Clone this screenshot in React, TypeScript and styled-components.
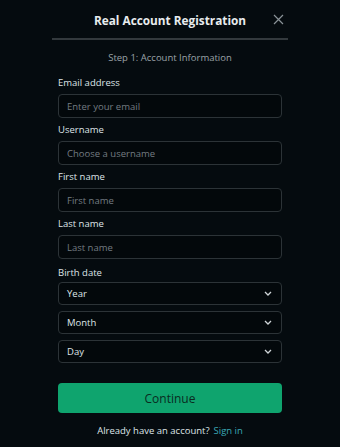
import React from "react";
import styled, { createGlobalStyle } from "styled-components";

const Global = createGlobalStyle`
  html, body { margin: 0; padding: 0; background: #050b0f; }
  body { font-family: "Open Sans", "Noto Sans", sans-serif; }
  * { box-sizing: border-box; }
`;

const Modal = styled.div`
  width: 340px;
  height: 447px;
  background: #050b0f;
  display: flex;
  flex-direction: column;
  align-items: center;
`;

const Header = styled.div`
  width: 236px;
  height: 40px;
  position: relative;
  display: flex;
  align-items: center;
  justify-content: center;
  border-bottom: 2px solid #33393d;
`;

const Title = styled.h1`
  margin: 0;
  padding-top: 1px;
  font-size: 11.8px;
  font-weight: 700;
  color: #e8ecee;
`;

const Close = styled.button`
  position: absolute;
  right: 4px;
  top: 13px;
  width: 12px;
  height: 12px;
  padding: 0;
  border: none;
  background: transparent;
  display: flex;
  align-items: center;
  justify-content: center;
`;

const Step = styled.div`
  margin-top: 11px;
  font-size: 9.5px;
  color: #9ba3a8;
`;

const Form = styled.form`
  width: 224px;
  margin-top: 13px;
  display: flex;
  flex-direction: column;
`;

const Field = styled.div`
  display: flex;
  flex-direction: column;
  margin-bottom: 6px;
`;

const Label = styled.label<{ $gap?: number; $top?: number }>`
  font-size: 9.5px;
  color: #dfe5e8;
  margin-top: ${(p) => p.$top ?? 0}px;
  margin-bottom: ${(p) => p.$gap ?? 6}px;
  line-height: 11px;
`;

const Input = styled.input`
  height: 24px;
  width: 100%;
  border: 1px solid #2c3337;
  border-radius: 4px;
  background: #03080b;
  padding: 0 8px;
  font-family: inherit;
  font-size: 9.5px;
  color: #e0e5e8;
  outline: none;
  &::placeholder { color: #737c82; }
`;

const SelectBox = styled.div`
  height: 23px;
  border: 1px solid #2c3337;
  border-radius: 4px;
  background: #03080b;
  padding: 0 9px 0 8px;
  display: flex;
  align-items: center;
  justify-content: space-between;
  font-size: 9.5px;
  color: #dfe5e8;
  margin-bottom: 6px;
`;

const Button = styled.button`
  margin-top: 14px;
  height: 30px;
  width: 100%;
  border: none;
  border-radius: 4px;
  background: #0fa46e;
  color: #0a2b1f;
  font-family: inherit;
  font-size: 12px;
`;

const Footer = styled.div`
  margin-top: 11px;
  font-size: 9.5px;
  color: #dfe5e8;
  text-align: center;
`;

const Link = styled.a`
  color: #3aa9b5;
  margin-left: 4px;
  text-decoration: none;
`;

const Chevron = () => (
  <svg width="8" height="5" viewBox="0 0 8 5">
    <path d="M1 1l3 3 3-3" stroke="#cfd5d8" strokeWidth="1.3" fill="none" />
  </svg>
);

const fields = [
  { label: "Email address", ph: "Enter your email" },
  { label: "Username", ph: "Choose a username" },
  { label: "First name", ph: "First name" },
  { label: "Last name", ph: "Last name" },
];

export default function App() {
  return (
    <>
      <Global />
      <Modal>
        <Header>
          <Title>Real Account Registration</Title>
          <Close aria-label="Close">
            <svg width="11" height="11" viewBox="0 0 11 11">
              <path d="M1 1l9 9M10 1l-9 9" stroke="#8a9297" strokeWidth="1.2" />
            </svg>
          </Close>
        </Header>
        <Step>Step 1: Account Information</Step>
        <Form>
          {fields.map((f) => (
            <Field key={f.label}>
              <Label>{f.label}</Label>
              <Input placeholder={f.ph} />
            </Field>
          ))}
          <Label $top={2} $gap={4}>Birth date</Label>
          {["Year", "Month", "Day"].map((s) => (
            <SelectBox key={s}>
              <span>{s}</span>
              <Chevron />
            </SelectBox>
          ))}
          <Button type="button">Continue</Button>
          <Footer>
            Already have an account?<Link href="#">Sign in</Link>
          </Footer>
        </Form>
      </Modal>
    </>
  );
}
